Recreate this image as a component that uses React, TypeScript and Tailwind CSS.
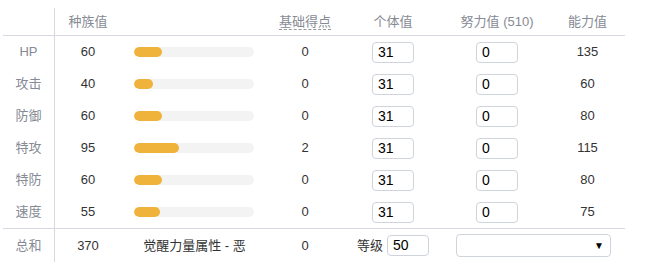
import React from 'react';

const stats = [
  { name: 'HP', base: 60, ev: 0, iv: 31, effort: 0, value: 135 },
  { name: '攻击', base: 40, ev: 0, iv: 31, effort: 0, value: 60 },
  { name: '防御', base: 60, ev: 0, iv: 31, effort: 0, value: 80 },
  { name: '特攻', base: 95, ev: 2, iv: 31, effort: 0, value: 115 },
  { name: '特防', base: 60, ev: 0, iv: 31, effort: 0, value: 80 },
  { name: '速度', base: 55, ev: 0, iv: 31, effort: 0, value: 75 },
];

const cols = 'grid grid-cols-[52px_66px_147px_74px_102px_106px_75px] items-center';

const NumInput: React.FC<{ value: number }> = ({ value }) => (
  <input
    readOnly
    value={value}
    className="w-[42px] h-[21px] border border-[#cfd3dc] rounded-[4px] pl-[5px] text-[14px] text-black outline-none bg-white"
  />
);

const App: React.FC = () => {
  return (
    <div
      className="w-[645px] h-[270px] bg-white pt-[8px] pl-[3px] text-[13px] text-[#333]"
      style={{ fontFamily: '"Liberation Sans", "Noto Sans CJK SC", sans-serif' }}
    >
      <div className="w-[622px]">
        {/* header */}
        <div className={`${cols} h-[28px] border-b border-[#d5d8de] text-[#858a94]`}>
          <div className="h-full border-r border-[#d5d8de]" />
          <div className="text-center">种族值</div>
          <div />
          <div className="text-center">
            <span className="border-b border-dashed border-[#999]">基础得点</span>
          </div>
          <div className="text-center">个体值</div>
          <div className="text-center">努力值 (510)</div>
          <div className="text-center">能力值</div>
        </div>

        {stats.map((s) => (
          <div key={s.name} className={`${cols} h-8`}>
            <div className="h-full flex items-center justify-center border-r border-[#d5d8de] text-[#858a94]">
              {s.name}
            </div>
            <div className="text-center">{s.base}</div>
            <div className="pl-[13px]">
              <div className="w-[120px] h-[10px] rounded-full bg-[#f3f3f3] overflow-hidden">
                <div
                  className="h-full rounded-full bg-[#efb33b]"
                  style={{ width: `${(s.base / 255) * 120}px` }}
                />
              </div>
            </div>
            <div className="text-center">{s.ev}</div>
            <div className="flex justify-center">
              <NumInput value={s.iv} />
            </div>
            <div className="flex justify-center">
              <NumInput value={s.effort} />
            </div>
            <div className="text-center">{s.value}</div>
          </div>
        ))}

        {/* total */}
        <div className={`${cols} h-[34px] border-t border-[#d5d8de]`}>
          <div className="h-full flex items-center justify-center border-r border-[#d5d8de] text-[#858a94]">
            总和
          </div>
          <div className="text-center">370</div>
          <div className="text-center">觉醒力量属性 - 恶</div>
          <div className="text-center">0</div>
          <div className="flex justify-center items-center gap-[4px]">
            <span>等级</span>
            <NumInput value={50} />
          </div>
          <div className="col-span-2 pl-[12px]">
            <div className="w-[155px] h-[23px] border border-[#cfd3dc] rounded-[4px] flex items-center justify-end pr-[6px]">
              <span className="text-[10px] text-black">▼</span>
            </div>
          </div>
        </div>
      </div>
    </div>
  );
};

export default App;
